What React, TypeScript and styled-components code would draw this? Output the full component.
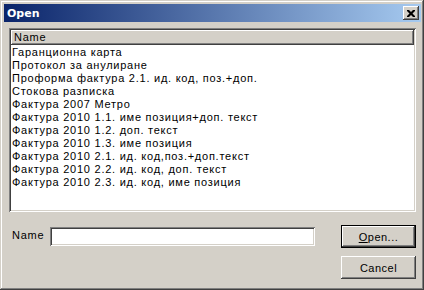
import React from "react";
import styled, { createGlobalStyle } from "styled-components";

const items = [
  "Гаранционна карта",
  "Протокол за анулиране",
  "Проформа фактура 2.1. ид. код, поз.+доп.",
  "Стокова разписка",
  "Фактура 2007 Метро",
  "Фактура 2010 1.1. име позиция+доп. текст",
  "Фактура 2010 1.2. доп. текст",
  "Фактура 2010 1.3. име позиция",
  "Фактура 2010 2.1. ид. код,поз.+доп.текст",
  "Фактура 2010 2.2. ид. код, доп. текст",
  "Фактура 2010 2.3. ид. код, име позиция",
];

const App = () => {
  return (
    <>
      <GlobalStyle />
      <Window>
        <TitleBar>
          <Title>Open</Title>
          <CloseButton>
            <svg width="8" height="7" viewBox="0 0 8 7">
              <path
                d="M0 0h2l2 2 2-2h2v1L5.5 3.5 8 6v1H6L4 5 2 7H0V6l2.5-2.5L0 1z"
                fill="#000"
              />
            </svg>
          </CloseButton>
        </TitleBar>
        <Body>
          <ListBox>
            <Header>
              <HeaderCell>Name</HeaderCell>
            </Header>
            <Items>
              {items.map((item) => (
                <Item key={item}>{item}</Item>
              ))}
            </Items>
          </ListBox>
          <Footer>
            <Label>Name</Label>
            <Input />
            <Buttons>
              <Button $default>
                <u>O</u>pen...
              </Button>
              <Button>Cancel</Button>
            </Buttons>
          </Footer>
        </Body>
      </Window>
    </>
  );
};

export default App;

const GlobalStyle = createGlobalStyle`
  body {
    margin: 0;
    background: #d4d0c8;
    font-family: "Liberation Sans", Arial, sans-serif;
    font-size: 11px;
    letter-spacing: 0.75px;
  }
`;

const Window = styled.div`
  width: 424px;
  height: 290px;
  box-sizing: border-box;
  background: #d4d0c8;
  padding: 3px;
  box-shadow: inset -1px -1px #404040, inset 1px 1px #d4d0c8,
    inset -2px -2px #808080, inset 2px 2px #ffffff;
  display: flex;
  flex-direction: column;
`;

const TitleBar = styled.div`
  height: 18px;
  margin-top: 1px;
  margin-left: 1px;
  background: linear-gradient(to right, #0a246a, #a6caf0);
  display: flex;
  align-items: center;
  justify-content: space-between;
  padding: 0 2px 0 3px;
`;

const Title = styled.div`
  color: #fff;
  font-weight: bold;
  font-size: 11px;
  font-family: "DejaVu Sans", Verdana, sans-serif;
  letter-spacing: 0;
`;

const CloseButton = styled.div`
  width: 16px;
  height: 14px;
  box-sizing: border-box;
  background: #d4d0c8;
  box-shadow: inset -1px -1px #404040, inset 1px 1px #ffffff,
    inset -2px -2px #808080;
  display: flex;
  align-items: center;
  justify-content: center;
`;

const Body = styled.div`
  flex: 1;
  display: flex;
  flex-direction: column;
  padding: 6px 5px 0 6px;
`;

const ListBox = styled.div`
  height: 184px;
  box-sizing: border-box;
  background: #fff;
  padding: 2px;
  box-shadow: inset 1px 1px #808080, inset -1px -1px #ffffff,
    inset 2px 2px #404040, inset -2px -2px #d4d0c8;
  display: flex;
  flex-direction: column;
`;

const Header = styled.div`
  height: 15px;
  background: #d4d0c8;
  box-shadow: inset -1px -1px #404040, inset 1px 1px #ffffff,
    inset -2px -2px #808080;
  display: flex;
  align-items: center;
`;

const HeaderCell = styled.div`
  padding-left: 3px;
  line-height: 13px;
`;

const Items = styled.div`
  padding: 1px 0 0 1px;
`;

const Item = styled.div`
  line-height: 13px;
  white-space: nowrap;
`;

const Footer = styled.div`
  display: flex;
  align-items: flex-start;
  margin-top: 13px;
`;

const Label = styled.div`
  width: 38px;
  padding-left: 3px;
  margin-top: 4px;
  line-height: 13px;
`;

const Input = styled.input`
  width: 265px;
  height: 19px;
  box-sizing: border-box;
  margin: 2px 0 0 0;
  border: none;
  background: #fff;
  box-shadow: inset 1px 1px #808080, inset -1px -1px #ffffff,
    inset 2px 2px #404040, inset -2px -2px #d4d0c8;
`;

const Buttons = styled.div`
  margin-left: auto;
  display: flex;
  flex-direction: column;
  gap: 8px;
`;

const Button = styled.div<{ $default?: boolean }>`
  width: 75px;
  height: 23px;
  box-sizing: border-box;
  background: #d4d0c8;
  display: flex;
  align-items: center;
  justify-content: center;
  color: #000;
  letter-spacing: 0.5px;
  box-shadow: ${(p) =>
    p.$default
      ? "inset 0 0 0 1px #000, inset -2px -2px #404040, inset 2px 2px #ffffff, inset -3px -3px #808080"
      : "inset -1px -1px #404040, inset 1px 1px #ffffff, inset -2px -2px #808080"};
`;
